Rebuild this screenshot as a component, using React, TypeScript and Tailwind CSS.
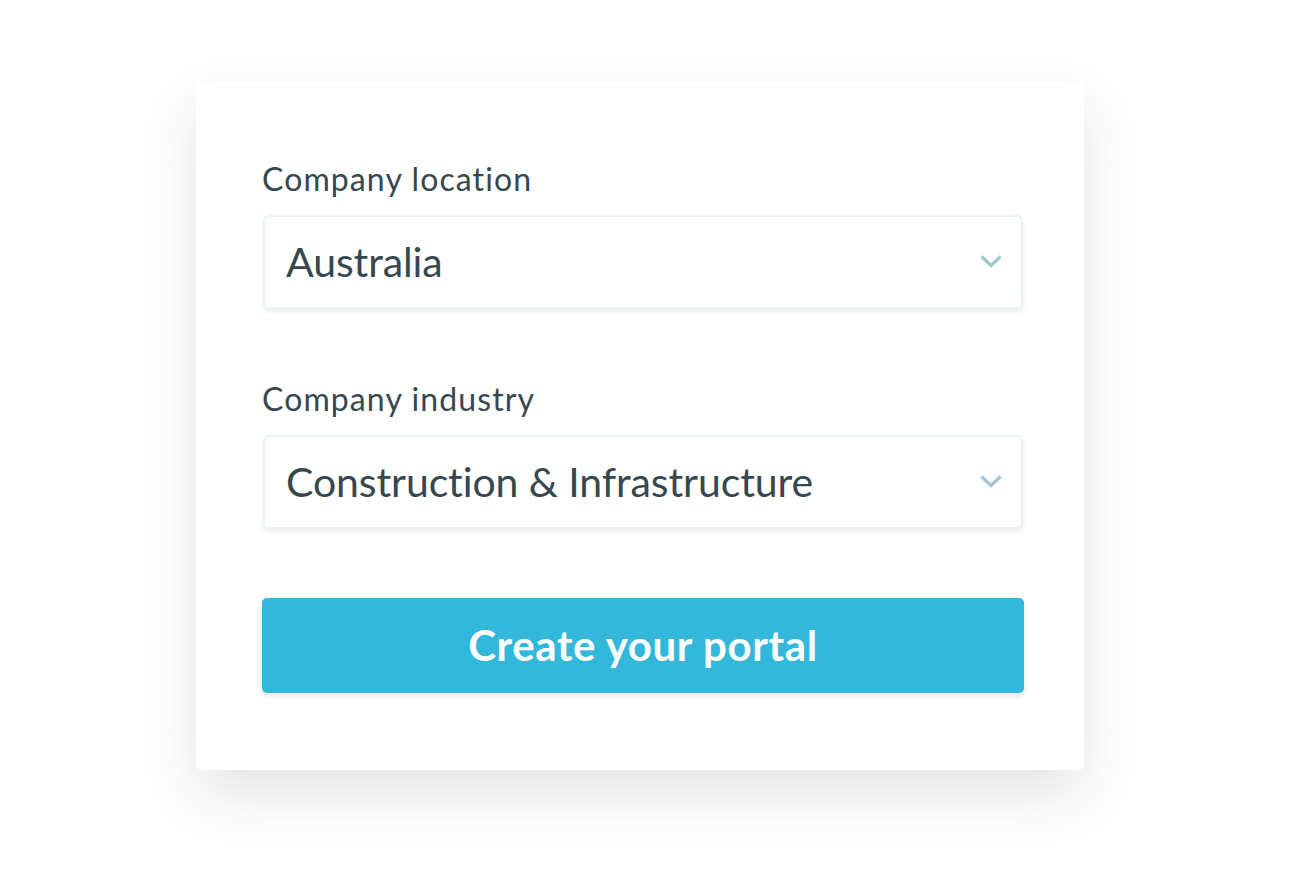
import React from 'react';

const fields = [
  { label: 'Company location', value: 'Australia' },
  { label: 'Company industry', value: 'Construction & Infrastructure' },
];

function Chevron() {
  return (
    <svg width="22" height="16" viewBox="0 0 22 16" fill="none" className="shrink-0">
      <path d="M1.5 2.5 L11 11.5 L20.5 2.5" stroke="#9fc6d0" strokeWidth="3.2" />
    </svg>
  );
}

export default function App() {
  return (
    <div className="min-h-[886px] w-full bg-white pl-[196px] pt-[82px] font-['Lato',sans-serif]">
      <div className="w-[888px] rounded-[6px] bg-white pl-[66px] pr-[60px] pt-[79px] pb-[77px] shadow-[0_24px_60px_rgba(0,0,0,0.11)]">
        {fields.map((f, i) => (
          <div key={f.label} className={i > 0 ? 'mt-[72px]' : ''}>
            <div className="text-[32px] leading-[36px] tracking-[1.1px] text-[#37474f]">{f.label}</div>
            <div className="mt-[18px] mx-[1px] flex h-[94px] items-center justify-between rounded-[6px] border-2 border-[#ebf2f4] bg-white pl-[21px] pr-[19px] shadow-[0_3px_4px_rgba(0,0,0,0.08)]">
              <span className="text-[41px] tracking-[-0.1px] text-[#37474f]">{f.value}</span>
              <Chevron />
            </div>
          </div>
        ))}
        <button className="mt-[69px] flex h-[95px] w-full items-center justify-center rounded-[5px] bg-[#33b8db] text-[42px] font-bold tracking-[0.6px] text-white shadow-[0_3px_6px_rgba(0,0,0,0.1)]">
          Create your portal
        </button>
      </div>
    </div>
  );
}
